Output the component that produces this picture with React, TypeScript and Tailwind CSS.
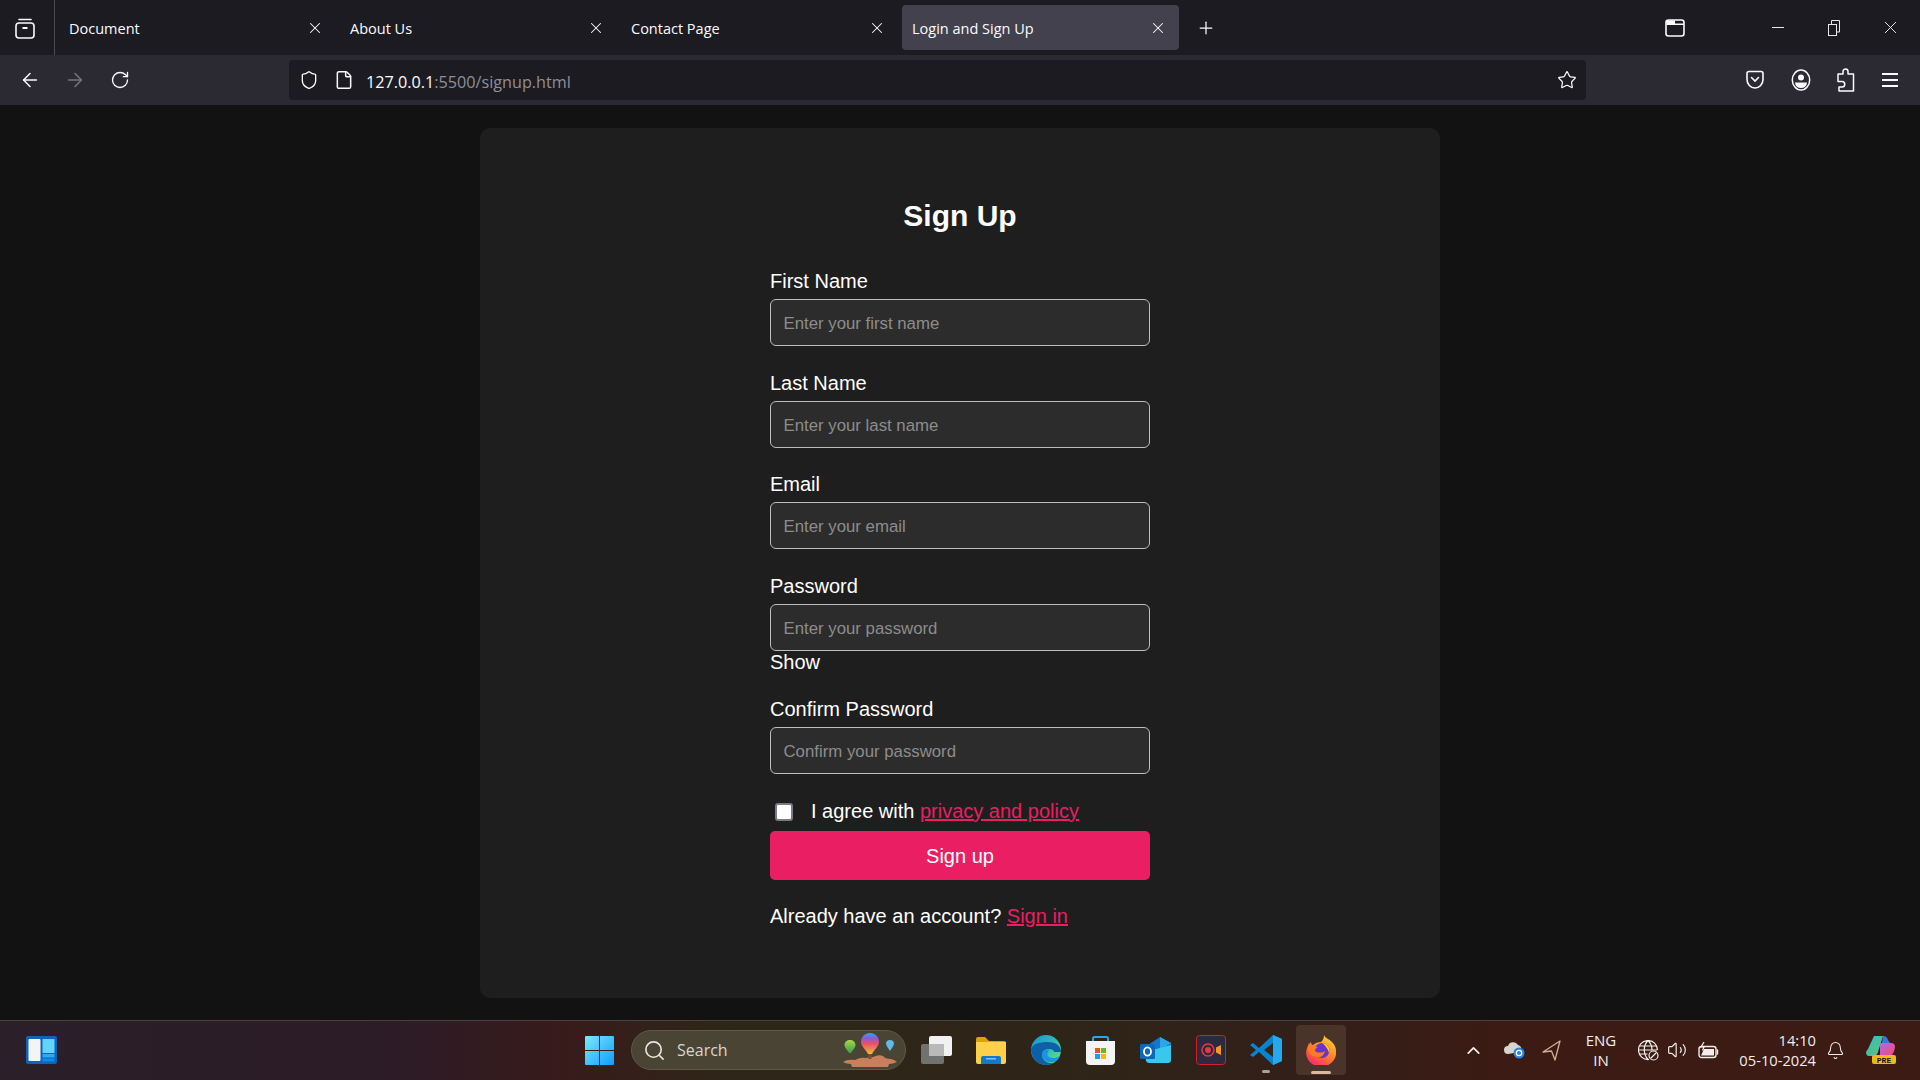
import { ArrowLeft, ArrowRight, Bell, ChevronUp, File, Plus, RotateCw, Search, Shield, Star, Volume2, X } from "lucide-react";

const uiFont = { fontFamily: '"Open Sans", "Noto Sans", sans-serif' };

const tabs = [
  { title: "Document", active: false },
  { title: "About Us", active: false },
  { title: "Contact Page", active: false },
  { title: "Login and Sign Up", active: true },
];

const fields = [
  { label: "First Name", placeholder: "Enter your first name" },
  { label: "Last Name", placeholder: "Enter your last name" },
  { label: "Email", placeholder: "Enter your email" },
  { label: "Password", placeholder: "Enter your password", show: true },
  { label: "Confirm Password", placeholder: "Confirm your password" },
];

function FirefoxView() {
  return (
    <svg width="20" height="22" viewBox="0 0 20 22" fill="none" stroke="#fbfbfe" strokeWidth="1.6">
      <path d="M4 2.500h12" strokeLinecap="round" />
      <rect x="1" y="6" width="18" height="15" rx="3" />
      <path d="M7.500 11h5" strokeWidth="2" />
    </svg>
  );
}

function BrowserWindow() {
  return (
    <svg width="20" height="18" viewBox="0 0 20 18">
      <rect x="1" y="1" width="18" height="16" rx="2.500" fill="none" stroke="#fbfbfe" strokeWidth="1.600" />
      <path d="M1.500 1.500h8.500v3h9v1.500h-17.500z" fill="#fbfbfe" />
    </svg>
  );
}

function Restore() {
  return (
    <svg width="12" height="16" viewBox="0 0 12 16" fill="none" stroke="#e8e8ea" strokeWidth="1">
      <rect x="0.500" y="4.500" width="8" height="11" />
      <path d="M3.500 4.500V0.500h8V12h-3" />
    </svg>
  );
}

function Pocket() {
  return (
    <svg width="18" height="20" viewBox="0 0 18 20" fill="none" stroke="#fbfbfe" strokeWidth="1.600">
      <path d="M1 3.500Q1 1.500 3 1.500h12q2 0 2 2v6a8 8.500 0 0 1-16 0z" />
      <path d="M5.500 7.500 9 11l3.500-3.500" strokeLinecap="round" />
    </svg>
  );
}

function Account() {
  return (
    <svg width="20" height="22" viewBox="0 0 20 22" fill="none" stroke="#fbfbfe" strokeWidth="1.500">
      <ellipse cx="10" cy="11" rx="8.700" ry="10" />
      <circle cx="10" cy="8.500" r="3" fill="#fbfbfe" stroke="none" />
      <path d="M4 13.500h12a6 5.500 0 0 1-12 0z" fill="#fbfbfe" stroke="none" />
    </svg>
  );
}

function Extensions() {
  return (
    <svg width="18" height="24" viewBox="0 0 18 24" fill="none" stroke="#fbfbfe" strokeWidth="1.500" strokeLinejoin="round">
      <path d="M6 6V3.500a2.500 2.500 0 0 1 5 0V6h5.500v17H2v-4h3a2.500 2.500 0 0 0 0-5.500H1V6z" />
    </svg>
  );
}

function Hamburger() {
  return (
    <div className="flex w-[16px] flex-col gap-[4px]">
      <div className="h-[2px] bg-[#fbfbfe]" />
      <div className="h-[2px] bg-[#fbfbfe]" />
      <div className="h-[2px] bg-[#fbfbfe]" />
    </div>
  );
}

function Widgets() {
  return (
    <svg width="31" height="28" viewBox="0 0 31 28">
      <rect width="31" height="28" rx="2" fill="#0f63b8" />
      <rect x="2.500" y="3" width="12" height="22" rx="1" fill="#f4f4f4" />
      <rect x="16.500" y="3" width="12" height="14" fill="#62d2ff" />
      <rect x="16.500" y="18" width="12" height="3.500" fill="#30a8f5" />
      <rect x="16.500" y="22.500" width="12" height="3" fill="#0a8cf0" />
    </svg>
  );
}

function Start() {
  return (
    <svg width="29" height="29" viewBox="0 0 29 29">
      <defs>
        <linearGradient id="startFill" x1="0" y1="0" x2="1" y2="1">
          <stop offset="0" stopColor="#7be8ff" />
          <stop offset="1" stopColor="#0f9dff" />
        </linearGradient>
      </defs>
      <path d="M1 0h13v14H0V1a1 1 0 0 1 1-1zM15 0h13a1 1 0 0 1 1 1v13H15zM0 15h14v14H1a1 1 0 0 1-1-1zM15 15h14v13a1 1 0 0 1-1 1H15z" fill="url(#startFill)" />
    </svg>
  );
}

function Balloons() {
  return (
    <svg width="54" height="34" viewBox="0 0 54 34">
      <defs>
        <linearGradient id="bigBalloon" x1="0" y1="0" x2="0" y2="1">
          <stop offset="0" stopColor="#38a3e8" />
          <stop offset="0.25" stopColor="#8a5ad8" />
          <stop offset="0.5" stopColor="#e8506a" />
          <stop offset="1" stopColor="#f2b63c" />
        </linearGradient>
        <linearGradient id="smallBalloon" x1="0" y1="0" x2="0" y2="1">
          <stop offset="0" stopColor="#a6d848" />
          <stop offset="1" stopColor="#3c9c4c" />
        </linearGradient>
      </defs>
      <path d="M0 29q4-3 12-2 6-3 10-2l8-1q6-3 10-1 2 3 8 3 4 1 6 3-4 2-8 2l-1 3H9l-1-3q-5 0-8-2z" fill="#c8805c" />
      <path d="M27 0c-5 0-9 3.500-9 9 0 4 5 8 7 12h4c2-4 7-8 7-12 0-5.500-4-9-9-9z" fill="url(#bigBalloon)" />
      <rect x="25.500" y="21" width="3" height="5" fill="#7a5030" />
      <path d="M7 7c-3 0-5.500 2-5.500 5 0 3 3 5 4.500 8h2c1.500-3 4.500-5 4.500-8 0-3-2.500-5-5.500-5z" fill="url(#smallBalloon)" />
      <path d="M47 7c-2.500 0-4 1.500-4 3.500 0 2.500 2.500 4.500 3.500 7h1c1-2.500 3.500-4.500 3.500-7 0-2-1.500-3.500-4-3.500z" fill="#62b8e8" />
    </svg>
  );
}

function TaskView() {
  return (
    <svg width="31" height="28" viewBox="0 0 31 28">
      <rect x="8" y="0" width="23" height="20" rx="2" fill="#f1f1f1" />
      <rect x="0" y="8" width="23" height="20" rx="2" fill="#77777a" fillOpacity="0.92" />
      <rect x="8" y="8" width="15" height="12" fill="#b9b9b9" />
    </svg>
  );
}

function Explorer() {
  return (
    <svg width="30" height="27" viewBox="0 0 30 27">
      <path d="M0 2a2 2 0 0 1 2-2h7l4 4h15a2 2 0 0 1 2 2v4H0z" fill="#e0a106" />
      <path d="M0 5h30v20a2 2 0 0 1-2 2H2a2 2 0 0 1-2-2z" fill="#fdd04a" />
      <path d="M5 27v-6a2 2 0 0 1 2-2h16a2 2 0 0 1 2 2v6z" fill="#1478c8" />
      <rect x="10" y="21" width="10" height="1.500" fill="#7cc4f0" />
    </svg>
  );
}

function Edge() {
  return (
    <svg width="30" height="30" viewBox="0 0 30 30">
      <defs>
        <linearGradient id="edgeTop" x1="0" y1="0" x2="1" y2="1">
          <stop offset="0" stopColor="#1390d8" />
          <stop offset="0.6" stopColor="#36c6b0" />
          <stop offset="1" stopColor="#7ce05c" />
        </linearGradient>
      </defs>
      <circle cx="15" cy="15" r="15" fill="url(#edgeTop)" />
      <path d="M0 15C1 25 8 30 15 30c3 0 6-1 8-2-7 1-12-3-12-8 0-4 3-6 7-6 3 0 5 1 5 3h7C30 11 25 7 17 7 8 7 1 9 0 15z" fill="#0d5fa8" />
      <path d="M11 20c0 5 6 8 12 7 3-1 5-3 6-6-3 2-8 3-11 1-2-1-2-3-1-5 0-1 1-2 2-2-4-1-8 1-8 5z" fill="#1b92e2" />
    </svg>
  );
}

function Store() {
  return (
    <svg width="29" height="29" viewBox="0 0 29 29">
      <path d="M7 6V2.500Q7 1 8.500 1h12Q22 1 22 2.500V6" fill="none" stroke="#28a8ea" strokeWidth="2" />
      <path d="M0 5h29v20a4 4 0 0 1-4 4H4a4 4 0 0 1-4-4z" fill="#f4f4f4" />
      <rect x="9" y="12" width="5" height="5" fill="#e8512a" />
      <rect x="15" y="12" width="5" height="5" fill="#76b900" />
      <rect x="9" y="18" width="5" height="5" fill="#1e9fe8" />
      <rect x="15" y="18" width="5" height="5" fill="#fcb900" />
    </svg>
  );
}

function Outlook() {
  return (
    <svg width="31" height="26" viewBox="0 0 31 26">
      <path d="M8 8 20 0l11 6v9H8z" fill="#1677c8" />
      <path d="M20 0l11 6-11 7z" fill="#28a8ea" />
      <path d="M5 15 31 8v15a3 3 0 0 1-3 3H9q-2 0-3-2z" fill="#38c8ee" />
      <rect x="0" y="7" width="15" height="15" rx="1.500" fill="#0d68b8" />
      <ellipse cx="7.500" cy="14.500" rx="3.500" ry="4.200" fill="none" stroke="#fff" strokeWidth="1.800" />
    </svg>
  );
}

function Recorder() {
  return (
    <svg width="30" height="30" viewBox="0 0 30 30">
      <rect x="0.500" y="0.500" width="29" height="29" rx="3" fill="#2d2a40" stroke="#d0202c" />
      <circle cx="12" cy="15" r="6" fill="none" stroke="#e83840" strokeWidth="1.500" />
      <circle cx="12" cy="15" r="3" fill="#e83840" />
      <path d="M20 12.500 25 10v10l-5-2.500z" fill="#f09a20" />
    </svg>
  );
}

function VsCode() {
  return (
    <svg width="32" height="30" viewBox="0 0 32 30">
      <path d="M23 0l9 4v22l-9 4-14-13-6 5-3-2 6-5-6-5 3-2 6 5z" fill="#0a84d0" />
      <path d="M23 0l9 4v22l-9 4z" fill="#25a8f0" />
      <path d="M23 8v14l-9-7z" fill="#2d2a1c" />
    </svg>
  );
}

function Firefox() {
  return (
    <svg width="30" height="30" viewBox="0 0 30 30">
      <defs>
        <linearGradient id="foxBody" x1="0.800" y1="0" x2="0.200" y2="1">
          <stop offset="0" stopColor="#ffd53a" />
          <stop offset="0.35" stopColor="#ff9a2a" />
          <stop offset="0.7" stopColor="#ff5a3c" />
          <stop offset="1" stopColor="#f0247a" />
        </linearGradient>
      </defs>
      <path d="M18 0c1 3 5 4 8 7 3 3 4 6 4 9a15 14 0 1 1-29-3c1-3 3-5 4-6 0 2 1 3 2 3 2-2 5-3 8-3 2-2 3-4 3-7z" fill="url(#foxBody)" />
      <circle cx="16" cy="15.500" r="7.500" fill="#6b35c4" />
      <path d="M16 8c4 0 7.500 3.500 7.500 7.500q0 1-.5 2.500c-1-4-4-8-7-10z" fill="#ffc12e" />
      <path d="M3 8c1 3 5 3 9 4-2 1-3 2-3 4 2 2 7 2 10 0-1 4-4 7-8 6-5 0-9-4-9-9 0-2 .5-4 1-5z" fill="#ff7a24" />
    </svg>
  );
}

function CloudSync() {
  return (
    <svg width="21" height="18" viewBox="0 0 21 18">
      <path d="M4 13a4 4 0 0 1 0-8 5.500 5.500 0 0 1 10-1 4 4 0 0 1 2 7z" fill="#d8d4d0" />
      <circle cx="15" cy="12" r="5.500" fill="#2c86dc" />
      <circle cx="15" cy="12" r="2.700" fill="none" stroke="#fff" strokeWidth="1.200" />
    </svg>
  );
}

function LocationArrow() {
  return (
    <svg width="19" height="21" viewBox="0 0 19 21" fill="none" stroke="#d4b098" strokeWidth="1.300" strokeLinejoin="round">
      <path d="M1 12 18 1l-5 19-3.500-9z" />
    </svg>
  );
}

function GlobeOff() {
  return (
    <svg width="21" height="21" viewBox="0 0 21 21" fill="none" stroke="#f3eeea" strokeWidth="1.200">
      <path d="M11 19.500A9.500 9.500 0 1 1 19.500 10M1 10h18M1.500 6h17M1.500 14h8M10 .5c-5 5-5 13 0 19M10 .5c3 3 4 6 4 9" />
      <circle cx="15.500" cy="15.500" r="4.500" />
      <path d="M12.500 18.500l6-6" />
    </svg>
  );
}

function Battery() {
  return (
    <svg width="21" height="17" viewBox="0 0 21 17" fill="none" stroke="#f3eeea" strokeWidth="1.400">
      <rect x="1" y="4.500" width="17" height="11" rx="2.500" />
      <path d="M19.500 8v4" strokeLinecap="round" />
      <path d="M3 13.500 6 7h10v6.500z" fill="#f3eeea" stroke="none" />
      <path d="M6 0 3 5h3L4.500 8.500" strokeWidth="1.200" />
    </svg>
  );
}

function Copilot() {
  return (
    <svg width="30" height="28" viewBox="0 0 30 28">
      <defs>
        <linearGradient id="copilotLeft" x1="0" y1="0" x2="1" y2="1">
          <stop offset="0" stopColor="#2cb8e8" />
          <stop offset="1" stopColor="#68c848" />
        </linearGradient>
        <linearGradient id="copilotRight" x1="0" y1="0" x2="1" y2="1">
          <stop offset="0" stopColor="#b868e0" />
          <stop offset="1" stopColor="#f0487c" />
        </linearGradient>
      </defs>
      <path d="M8 0h9l-5 16q-1 4-5 4H3q-3 0-3-4 1-2 2-3z" fill="url(#copilotLeft)" />
      <path d="M17 0q4 0 5 4l2 3h-8z" fill="#3c78e0" />
      <path d="M14 7h11q4 0 4 4t-3 8H14z" fill="url(#copilotRight)" />
      <rect x="6" y="19" width="24" height="9" rx="2" fill="#f7b51c" />
      <text x="18" y="26.500" textAnchor="middle" fontSize="8" fontWeight="700" fill="#1c1408" style={{ fontFamily: '"Liberation Mono", monospace' }}>PRE</text>
    </svg>
  );
}

function TabBar() {
  return (
    <div className="flex h-[55px] items-center bg-[#1c1b22]" style={uiFont}>
      <div className="flex h-full w-[55px] items-center justify-center border-r border-[#4a4a50] pr-[4px]">
        <FirefoxView />
      </div>
      <div className="flex items-center">
        {tabs.map((tab) => (
          <div
            key={tab.title}
            className={`ml-[4px] flex h-[45px] w-[277px] items-center justify-between rounded-[4px] pl-[10px] pr-[12px] ${tab.active ? "bg-[#42414d]" : ""}`}
          >
            <span className="pt-[2px] text-[14.5px] text-[#fbfbfe]">{tab.title}</span>
            <X size={18} strokeWidth={1.4} className="text-[#fbfbfe]" />
          </div>
        ))}
      </div>
      <Plus size={20} strokeWidth={1.5} className="ml-[17px] text-[#fbfbfe]" />
      <div className="ml-auto flex items-center">
        <BrowserWindow />
        <div className="ml-[87px] flex w-[148px] items-center justify-between pr-[19px]">
          <div className="h-[1px] w-[12px] bg-[#e8e8ea]" />
          <div className="ml-[3px]"><Restore /></div>
          <X size={21} strokeWidth={1.1} className="text-[#e8e8ea]" />
        </div>
      </div>
    </div>
  );
}

function Toolbar() {
  return (
    <div className="flex h-[50px] items-center bg-[#2b2a33]" style={uiFont}>
      <div className="flex w-[289px] items-center gap-[23px] pl-[19px]">
        <ArrowLeft size={22} strokeWidth={1.6} className="text-[#fbfbfe]" />
        <ArrowRight size={22} strokeWidth={1.6} className="text-[#77767d]" />
        <RotateCw size={20} strokeWidth={1.6} className="ml-[1px] text-[#fbfbfe]" />
      </div>
      <div className="flex h-[40px] w-[1297px] items-center rounded-[4px] bg-[#1c1b22] pl-[10px] pr-[9px]">
        <Shield size={20} strokeWidth={1.6} className="text-[#fbfbfe]" />
        <File size={20} strokeWidth={1.8} className="ml-[15px] text-[#fbfbfe]" />
        <span className="ml-[12px] pt-[5px] text-[16.2px] text-[#fbfbfe]">
          127.0.0.1<span className="text-[#8f8f95]">:5500/signup.html</span>
        </span>
        <Star size={20} strokeWidth={1.5} className="ml-auto text-[#fbfbfe]" />
      </div>
      <div className="ml-[160px] flex w-[152px] items-center justify-between">
        <Pocket />
        <Account />
        <Extensions />
        <Hamburger />
      </div>
    </div>
  );
}

function SignUpCard() {
  return (
    <div className="mx-auto h-[870px] w-[960px] rounded-[10px] bg-[#1e1e1e] pt-[68px] text-[20px] text-white" style={{ fontFamily: '"Liberation Sans", sans-serif' }}>
      <h1 className="text-center text-[30px] leading-[40px] font-bold">Sign Up</h1>
      <form className="mx-auto mt-[34px] w-[380px]">
        <div>
          {fields.map((field) => (
            <div key={field.label} className="mb-[25.67px] last:mb-[20px]">
              <label className="mb-[6px] block leading-[23px]">{field.label}</label>
              <input
                readOnly
                placeholder={field.placeholder}
                className="block h-[47px] w-full rounded-[6px] border border-[#bdbdbd] bg-[#2c2c2c] px-[12.5px] pt-[3px] text-[16.8px] outline-none placeholder:text-[#8c8c8c]"
              />
              {field.show && <div className="-mb-[2px] leading-[23px]">Show</div>}
            </div>
          ))}
        </div>
        <div className="flex h-[37px] items-center pb-[3px] pl-[5px]">
          <input type="checkbox" className="mt-[3px] h-[18px] w-[18px] appearance-none rounded-[3px] border-2 border-[#7b7b88] bg-white" />
          <span className="ml-[18px]">
            I agree with <a className="text-[#e91e63] underline">privacy and policy</a>
          </span>
        </div>
        <button type="button" className="block h-[49px] w-full rounded-[5px] bg-[#e91e63] pt-[1px] text-center text-[20px] text-white">
          Sign up
        </button>
        <p className="mt-[25px] leading-[23px]">
          Already have an account? <a className="text-[#e91e63] underline">Sign in</a>
        </p>
      </form>
    </div>
  );
}

function Taskbar() {
  return (
    <div
      className="flex h-[60px] items-center border-t border-[#4b4240] bg-[linear-gradient(90deg,#2b1f29_0%,#2c1c28_20%,#381b1b_29%,#2e2618_38%,#2e2518_55%,#331f19_68%,#3b1b14_78%,#3b1b14_100%)] pb-[1px] text-[#f3eeea]"
      style={uiFont}
    >
      <div className="ml-[26px] w-[559px]">
        <Widgets />
      </div>
      <Start />
      <div className="ml-[17px] flex h-[40px] w-[275px] items-center justify-between rounded-full border border-[#5f5848] bg-[#4a4434] pl-[11px] pr-[8px]">
        <div className="flex items-center gap-[11px]">
          <Search size={23} strokeWidth={1.7} className="text-[#e8e4de]" />
          <span className="text-[16px] text-[#d9d6d0]">Search</span>
        </div>
        <Balloons />
      </div>
      <div className="ml-[15px] flex w-[375px] items-center">
        <div className="flex w-[55px]"><TaskView /></div>
        <div className="flex w-[55px]"><Explorer /></div>
        <div className="flex w-[55px]"><Edge /></div>
        <div className="flex w-[54px]"><Store /></div>
        <div className="flex w-[56px]"><Outlook /></div>
        <div className="flex w-[54px]"><Recorder /></div>
        <div className="relative flex h-[50px] w-[46px] items-center">
          <VsCode />
          <div className="absolute bottom-[2px] left-[12px] h-[3px] w-[8px] rounded-full bg-[#a8a498]" />
        </div>
      </div>
      <div className="relative flex h-[50px] w-[50px] items-center justify-center rounded-[4px] bg-[#4a3328]">
        <Firefox />
        <div className="absolute bottom-[1px] left-[15px] h-[3px] w-[20px] rounded-full bg-[#dcb8a0]" />
      </div>
      <div className="ml-[117px] flex items-center">
        <ChevronUp size={21} strokeWidth={2} className="text-[#f3eeea]" />
        <div className="ml-[20px]"><CloudSync /></div>
        <div className="ml-[17px]"><LocationArrow /></div>
        <div className="ml-[15px] w-[50px] text-center text-[15px] leading-[20px]">
          ENG<br />IN
        </div>
        <div className="ml-[12px]"><GlobeOff /></div>
        <Volume2 size={20} strokeWidth={1.4} className="ml-[8px] text-[#f3eeea]" />
        <div className="ml-[11px]"><Battery /></div>
        <div className="ml-[19px] w-[78px] text-right text-[14.7px] leading-[20px]">
          14:10<br />05-10-2024
        </div>
        <Bell size={19} strokeWidth={1.3} className="ml-[10px] text-[#f3eeea]" />
        <div className="ml-[21px]"><Copilot /></div>
      </div>
    </div>
  );
}

export default function App() {
  return (
    <div className="flex h-screen w-full flex-col overflow-hidden bg-[#121212]">
      <TabBar />
      <Toolbar />
      <main className="flex-1 pt-[23px]">
        <SignUpCard />
      </main>
      <Taskbar />
    </div>
  );
}
